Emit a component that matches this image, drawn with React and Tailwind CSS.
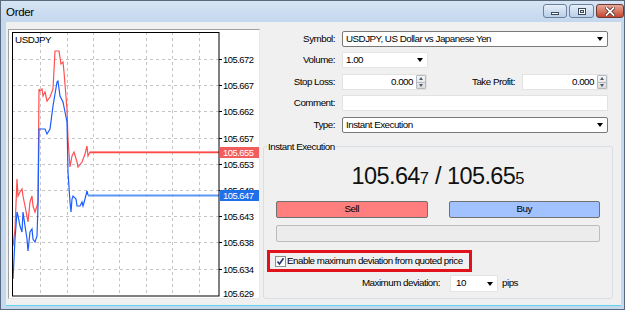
import React from "react";

const red = [[13,247],[15,230],[17,180],[18,197],[20,193],[22,190],[23,197],[25,207],[28,223],[30,203],[32,197],[33,207],[35,213],[37,207],[38,203],[39,90],[40,92],[42,90],[43,97],[45,93],[47,102],[50,98],[53,90],[55,52],[59,52],[61,65],[63,63],[64,73],[67,110],[68,140],[70,168],[72,157],[74,153],[77,163],[78,168],[82,163],[85,155],[87,147],[88,157],[90,153]];
const blue = [[13,280],[15,240],[17,213],[18,217],[20,227],[22,233],[23,213],[25,227],[27,240],[28,252],[30,233],[32,230],[33,240],[35,243],[37,237],[38,207],[39,130],[45,130],[47,135],[50,130],[53,107],[57,83],[58,82],[60,97],[63,103],[65,113],[67,123],[68,173],[70,203],[71,213],[72,200],[73,197],[76,200],[77,207],[80,207],[82,203],[83,207],[85,200],[87,192],[88,196]];

const gridY = [60, 86, 112, 139, 165, 191, 217, 243, 270];
const labels = ["105.672","105.667","105.662","105.657","105.653","105.648","105.643","105.638","105.634"];
const gridX = [40, 67, 93, 119, 146, 172, 199];
const FF = "Liberation Sans, Arial, sans-serif";

function Chart() {
  const pts = (a) => a.map((p) => p.join(",")).join(" ");
  return (
    <svg width="250" height="268" viewBox="9 31 250 268" className="block">
      <rect x="9" y="31" width="250" height="268" fill="#ffffff" />
      {gridY.map((y) => (
        <line key={y} x1="12" x2="219" y1={y + 0.5} y2={y + 0.5} stroke="#c4c4c4" strokeDasharray="3 3" />
      ))}
      {gridX.map((x) => (
        <line key={x} x1={x + 0.5} x2={x + 0.5} y1="33" y2="297" stroke="#c4c4c4" strokeDasharray="3 3" />
      ))}
      <polyline points={pts(red) + " 219,153"} fill="none" stroke="#ff4f4f" strokeWidth="1.2" />
      <line x1="90" x2="219" y1="153.5" y2="153.5" stroke="#ff4a4a" strokeWidth="1.3" />
      <polyline points={pts(blue)} fill="none" stroke="#1b5cff" strokeWidth="1.2" />
      <line x1="88" x2="219" y1="196.5" y2="196.5" stroke="#5b98f4" strokeWidth="2" />
      <rect x="12.5" y="33.5" width="206.5" height="263.5" fill="none" stroke="#000" strokeWidth="1" />
      {gridY.map((y) => (
        <line key={"t" + y} x1="219" x2="222" y1={y + 0.5} y2={y + 0.5} stroke="#000" />
      ))}
      <text x="15" y="44" fontFamily={FF} fontSize="9.8" letterSpacing="-0.4" fill="#000">USDJPY</text>
      {labels.map((l, i) => (
        <text key={l} x="223" y={gridY[i] + 3.5} fontFamily={FF} fontSize="9.4" letterSpacing="-0.5" fill="#000">{l}</text>
      ))}
      <text x="223" y="298" fontFamily={FF} fontSize="9.4" letterSpacing="-0.5" fill="#000">105.629</text>
      <rect x="220" y="148" width="40" height="11" fill="#f25c5c" />
      <text x="223" y="156.5" fontFamily={FF} fontSize="9.4" letterSpacing="-0.5" fill="#fff">105.655</text>
      <rect x="220" y="191" width="40" height="11" fill="#1f6fe8" />
      <text x="223" y="199.5" fontFamily={FF} fontSize="9.4" letterSpacing="-0.5" fill="#fff">105.647</text>
    </svg>
  );
}

function Tri() {
  return <span className="w-0 h-0 border-l-[3.5px] border-r-[3.5px] border-t-[4px] border-l-transparent border-r-transparent border-t-black" />;
}

function Spinner() {
  return (
    <div className="flex flex-col w-[10px] h-[14px] border border-[#b4b8bf] rounded-[1px] bg-gradient-to-b from-[#f6f6f6] to-[#dcdcdc]">
      <div className="flex-1 flex items-center justify-center border-b border-[#b4b8bf]">
        <span className="w-0 h-0 border-l-[2.5px] border-r-[2.5px] border-b-[3px] border-l-transparent border-r-transparent border-b-[#4a5a70]" />
      </div>
      <div className="flex-1 flex items-center justify-center">
        <span className="w-0 h-0 border-l-[2.5px] border-r-[2.5px] border-t-[3px] border-l-transparent border-r-transparent border-t-[#4a5a70]" />
      </div>
    </div>
  );
}

function Label({ children, className = "" }) {
  return <div className={"w-[72px] text-right shrink-0 " + className}>{children}</div>;
}

export default function App() {
  const ui = "font-['Liberation_Sans',Arial,sans-serif] text-[9.8px] tracking-[-0.5px] text-black";
  return (
    <div className={"w-[625px] h-[310px] flex flex-col bg-[#c4d8ee] border border-[#5a6a7c] overflow-hidden " + ui}>
      {/* title bar */}
      <div className="h-[21px] shrink-0 flex items-start bg-gradient-to-b from-[#d6e4f4] to-[#c3d7ee]">
        <div className="pl-[5px] pt-[5px] text-[11.5px] tracking-[-0.3px] leading-[12px] text-black">Order</div>
        <div className="ml-auto flex gap-[2px] pt-[3px]">
          <div className="w-[24px] h-[14px] rounded-[3px] border border-[#6f819a] bg-gradient-to-b from-[#e6eff9] to-[#b9cfe8] flex items-center justify-center">
            <span className="mt-[4px] w-[8px] h-[3px] bg-white border border-[#3c4a5c]" />
          </div>
          <div className="w-[25px] h-[14px] rounded-[3px] border border-[#6f819a] bg-gradient-to-b from-[#e6eff9] to-[#b9cfe8] flex items-center justify-center">
            <span className="w-[8px] h-[7px] border border-[#3c4a5c] bg-white flex items-center justify-center">
              <span className="w-[4px] h-[3px] border border-[#3c4a5c] bg-[#dfe8f2]" />
            </span>
          </div>
          <div className="w-[28px] h-[14px] rounded-[3px] border border-[#6b3a32] bg-gradient-to-b from-[#e8a898] to-[#c4452d] flex items-center justify-center">
            <svg width="10" height="9" viewBox="0 0 10 9">
              <path d="M1.5 1 L8.5 8 M8.5 1 L1.5 8" stroke="#3a1a14" strokeWidth="3.2" strokeLinecap="square" />
              <path d="M1.5 1 L8.5 8 M8.5 1 L1.5 8" stroke="#ffffff" strokeWidth="1.8" strokeLinecap="square" />
            </svg>
          </div>
        </div>
      </div>
      {/* client */}
      <div className="flex-1 ml-[5px] mr-[3px] mb-[3px] bg-[#f0f0f0] flex border-b border-[#62d2ec]">
        <div className="ml-[2px] mt-[7px] w-[252px] h-[270px] border border-t-[#a0a0a0] border-l-[#a0a0a0] border-b-[#e8e8e8] border-r-[#e8e8e8]">
          <Chart />
        </div>
        <div className="ml-[3px] w-[350px] flex flex-col pt-[9px]">
          <div className="flex items-center h-[16px]">
            <Label>Symbol:</Label>
            <div className="ml-[7px] w-[266px] h-[16px] border border-[#7a7a7a] rounded-[2px] bg-white flex items-center pl-[3px] pr-[4px]">
              <span>USDJPY, US Dollar vs Japanese Yen</span>
              <span className="ml-auto flex"><Tri /></span>
            </div>
          </div>
          <div className="flex items-center h-[16px] mt-[5px]">
            <Label>Volume:</Label>
            <div className="ml-[7px] w-[86px] h-[16px] border border-[#e4e4e4] bg-white flex items-center pl-[3px] pr-[4px]">
              <span>1.00</span>
              <span className="ml-auto flex"><Tri /></span>
            </div>
          </div>
          <div className="flex items-center h-[16px] mt-[6px]">
            <Label>Stop Loss:</Label>
            <div className="ml-[7px] w-[85px] h-[16px] border border-[#e2e2e2] bg-white flex items-center justify-end">
              <span className="mr-[3px]">0.000</span>
              <Spinner />
            </div>
            <div className="ml-auto">Take Profit:</div>
            <div className="ml-[7px] mr-[5px] w-[86px] h-[16px] border border-[#e2e2e2] bg-white flex items-center justify-end">
              <span className="mr-[3px]">0.000</span>
              <Spinner />
            </div>
          </div>
          <div className="flex items-center h-[16px] mt-[5px]">
            <Label>Comment:</Label>
            <div className="ml-[7px] w-[266px] h-[16px] border border-[#e2e2e2] bg-white" />
          </div>
          <div className="flex items-center h-[16px] mt-[6px]">
            <Label>Type:</Label>
            <div className="ml-[7px] w-[266px] h-[16px] border border-[#7a7a7a] rounded-[2px] bg-white flex items-center pl-[3px] pr-[4px]">
              <span>Instant Execution</span>
              <span className="ml-auto flex"><Tri /></span>
            </div>
          </div>
          <fieldset className="mt-[8px] h-[158px] border border-[#d5dfe5] rounded-[3px] flex flex-col">
            <legend className="ml-[3px] px-[1px] leading-[11px]">Instant Execution</legend>
            <div className="flex justify-center items-baseline mt-[11px] h-[26px] leading-[26px] text-[23.5px] tracking-[-0.6px] text-[#111]">
              <span>105.64</span>
              <span className="text-[16.5px] tracking-[0px]">7</span>
              <span className="px-[6px]">/</span>
              <span>105.65</span>
              <span className="text-[16.5px] tracking-[0px]">5</span>
            </div>
            <div className="flex gap-[21px] px-[12px] mt-[12px]">
              <div className="flex-1 h-[17px] border border-[#707070] rounded-[2px] bg-[#ff7f7f] flex items-center justify-center">Sell</div>
              <div className="flex-1 h-[17px] border border-[#707070] rounded-[2px] bg-[#a1c1ff] flex items-center justify-center">Buy</div>
            </div>
            <div className="mx-[12px] mt-[7px] h-[17px] border border-[#bcbcbc] rounded-[2px] bg-[#ececec]" />
            <div className="ml-[3px] mt-[8px] w-[205px] h-[22px] border-[3px] border-[#e1121b] flex items-center pl-[5px]">
              <div className="w-[11px] h-[11px] shrink-0 border border-[#8e8f8f] bg-gradient-to-br from-[#f4f4f4] to-[#ffffff] flex items-center justify-center">
                <svg width="9" height="9" viewBox="0 0 9 9">
                  <path d="M1.5 4.5 L3.5 7 L7.5 1.2" fill="none" stroke="#21316b" strokeWidth="1.6" />
                </svg>
              </div>
              <span className="ml-[1px] whitespace-nowrap">Enable maximum deviation from quoted price</span>
            </div>
            <div className="flex items-center mt-[3px] h-[17px]">
              <div className="w-[176px] text-right">Maximum deviation:</div>
              <div className="ml-[10px] w-[48px] h-[17px] border border-[#e4e4e4] bg-white flex items-center pl-[5px] pr-[4px]">
                <span>10</span>
                <span className="ml-auto flex"><Tri /></span>
              </div>
              <span className="ml-[4px]">pips</span>
            </div>
          </fieldset>
        </div>
      </div>
    </div>
  );
}
